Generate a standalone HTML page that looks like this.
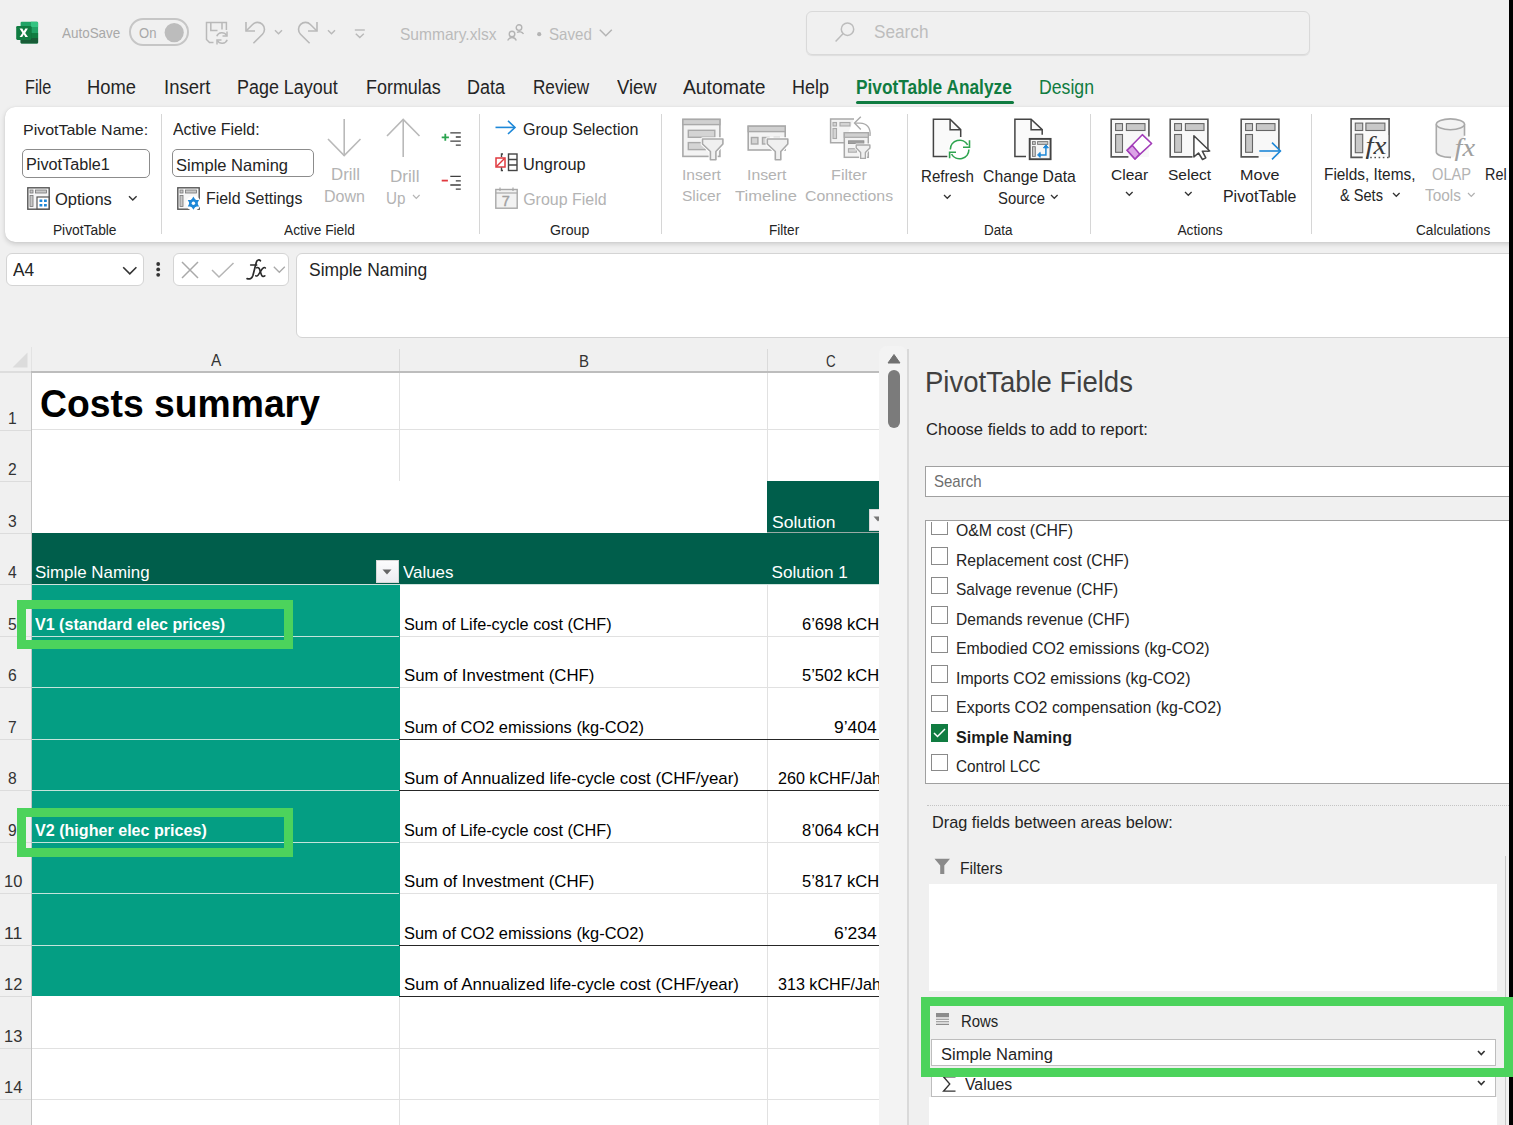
<!DOCTYPE html>
<html><head><meta charset="utf-8"><title>Excel</title>
<style>
html,body{margin:0;padding:0;}
body{width:1513px;height:1125px;overflow:hidden;position:relative;background:#f0f0f0;font-family:"Liberation Sans",sans-serif;}
.t{position:absolute;white-space:nowrap;transform-origin:0 0;}
.r{position:absolute;box-sizing:border-box;}
svg.r{overflow:visible;}
</style></head><body>
<svg class="r" style="left:16px;top:21px;" width="23" height="23" viewBox="0 0 23 23">
<rect x="4.6" y="0.8" width="17.5" height="21.7" rx="1.2" fill="#21a366"/>
<path d="M15 0.8 H20.9 A1.2 1.2 0 0 1 22.1 2 V6 H15 Z" fill="#33c481"/>
<rect x="15" y="12" width="7.1" height="5" fill="#107c41"/>
<path d="M4.6 17 H22.1 V21.3 A1.2 1.2 0 0 1 20.9 22.5 H5.8 A1.2 1.2 0 0 1 4.6 21.3 Z" fill="#185c37"/>
<rect x="4.6" y="6" width="11" height="13" fill="#000" opacity="0.18"/>
<rect x="0.2" y="4.9" width="15.3" height="14" rx="1.3" fill="#107c41"/>
<path d="M3.6 7.4 H6.3 L7.8 10.3 L9.3 7.4 H11.9 L9.2 11.9 L12 16 H9.3 L7.8 13.3 L6.2 16 H3.6 L6.4 11.9 Z" fill="#fff"/>
</svg>
<div class="t" style="left:61.50px;top:24.00px;font-size:14.971px;line-height:17.000px;font-weight:normal;color:#a8a8a8;transform:scaleX(0.8980);">AutoSave</div>
<div class="r" style="left:129.2px;top:18.3px;width:59.400000000000006px;height:27.400000000000002px;border:2px solid #c6c6c6;border-radius:14px;"></div>
<div class="t" style="left:138.80px;top:24.00px;font-size:14.971px;line-height:17.000px;font-weight:normal;color:#a8a8a8;transform:scaleX(0.8713);">On</div>
<svg class="r" style="left:164px;top:23px;" width="20" height="20" viewBox="0 0 20 20"><circle cx="10.2" cy="9.6" r="9.6" fill="#bcbcbc"/></svg>
<svg class="r" style="left:205px;top:21px;" width="24" height="24" viewBox="0 0 24 24"><g fill="none" stroke="#b9b9b9" stroke-width="1.5">
<path d="M21.4 9 V1.5 H1.5 V18.5 L4.5 21.5 H8.5"/><path d="M5.8 1.5 V9.5 H12.5"/><path d="M17 1.5 V8.5"/>
<path d="M11.8 15.2 A5.4 5.4 0 0 1 21.6 14.5"/><path d="M22.2 18.8 A5.4 5.4 0 0 1 12.4 19.5"/>
<path d="M22 10.5 V15 H17.5"/><path d="M12 23.5 V19 H16.5"/></g></svg>
<svg class="r" style="left:244px;top:21px;" width="24" height="24" viewBox="0 0 24 24"><g fill="none" stroke="#b9b9b9" stroke-width="1.6">
<path d="M2 1 V10 H11"/><path d="M2.3 9.7 L8.6 3.5 A6.9 6.9 0 0 1 18.5 13.2 L9.4 22.3"/></g></svg>
<svg class="r" style="left:274px;top:29px;" width="10" height="8" viewBox="0 0 10 8"><path d="M1 1.2 L4.5 4.8 L8 1.2" fill="none" stroke="#b9b9b9" stroke-width="1.4"/></svg>
<svg class="r" style="left:297px;top:21px;" width="24" height="24" viewBox="0 0 24 24"><g fill="none" stroke="#b9b9b9" stroke-width="1.6">
<path d="M20 1 V10 H11"/><path d="M19.7 9.7 L13.4 3.5 A6.9 6.9 0 0 0 3.5 13.2 L12.6 22.3"/></g></svg>
<svg class="r" style="left:327px;top:29px;" width="10" height="8" viewBox="0 0 10 8"><path d="M1 1.2 L4.5 4.8 L8 1.2" fill="none" stroke="#b9b9b9" stroke-width="1.4"/></svg>
<svg class="r" style="left:354px;top:29px;" width="12" height="11" viewBox="0 0 12 11"><g fill="none" stroke="#b9b9b9" stroke-width="1.4"><path d="M0.8 1 H10.8"/><path d="M1.8 4.8 L5.8 8.6 L9.8 4.8"/></g></svg>
<div class="t" style="left:399.50px;top:25.00px;font-size:16.715px;line-height:19.000px;font-weight:normal;color:#bbbbbb;transform:scaleX(0.9305);">Summary.xlsx</div>
<svg class="r" style="left:507px;top:24px;" width="18" height="17" viewBox="0 0 18 17"><g fill="none" stroke="#b4b4b4" stroke-width="1.4"><circle cx="5" cy="10" r="2.8"/><path d="M0.7 16.5 A4.6 4.6 0 0 1 9.3 16.5"/>
<circle cx="12" cy="3.6" r="2.8"/><path d="M10 8.5 A4.6 4.6 0 0 1 16.5 10"/></g></svg>
<svg class="r" style="left:537px;top:32px;" width="5" height="5" viewBox="0 0 5 5"><circle cx="2.2" cy="2.2" r="2.1" fill="#b4b4b4"/></svg>
<div class="t" style="left:549.40px;top:25.00px;font-size:16.715px;line-height:19.000px;font-weight:normal;color:#bbbbbb;transform:scaleX(0.9051);">Saved</div>
<svg class="r" style="left:599px;top:29px;" width="14" height="8" viewBox="0 0 14 8"><path d="M0.8 0.8 L6.8 6.8 L12.8 0.8" fill="none" stroke="#b4b4b4" stroke-width="1.5"/></svg>
<div class="r" style="left:805.5px;top:10.7px;width:504.0999999999999px;height:44.7px;border:1.3px solid #d9d9d9;border-radius:6px;box-shadow:0 1px 1px rgba(0,0,0,0.08);"></div>
<svg class="r" style="left:834px;top:22px;" width="22" height="22" viewBox="0 0 22 22"><g fill="none" stroke="#bcbcbc" stroke-width="1.5"><circle cx="13.5" cy="7.2" r="6.2"/><path d="M9.2 11.6 L1.6 19.6"/></g></svg>
<div class="t" style="left:874.00px;top:21.00px;font-size:18.314px;line-height:21.000px;font-weight:normal;color:#bdbdbd;transform:scaleX(0.9392);">Search</div>
<div class="t" style="left:24.60px;top:76.00px;font-size:19.913px;line-height:22.000px;font-weight:normal;color:#242424;transform:scaleX(0.8165);">File</div>
<div class="t" style="left:87.30px;top:76.00px;font-size:19.913px;line-height:22.000px;font-weight:normal;color:#242424;transform:scaleX(0.9206);">Home</div>
<div class="t" style="left:163.50px;top:76.00px;font-size:19.913px;line-height:22.000px;font-weight:normal;color:#242424;transform:scaleX(0.9297);">Insert</div>
<div class="t" style="left:237.30px;top:76.00px;font-size:19.913px;line-height:22.000px;font-weight:normal;color:#242424;transform:scaleX(0.9005);">Page Layout</div>
<div class="t" style="left:365.50px;top:76.00px;font-size:19.913px;line-height:22.000px;font-weight:normal;color:#242424;transform:scaleX(0.9001);">Formulas</div>
<div class="t" style="left:467.30px;top:76.00px;font-size:19.913px;line-height:22.000px;font-weight:normal;color:#242424;transform:scaleX(0.9034);">Data</div>
<div class="t" style="left:533.40px;top:76.00px;font-size:19.913px;line-height:22.000px;font-weight:normal;color:#242424;transform:scaleX(0.8607);">Review</div>
<div class="t" style="left:617.00px;top:76.00px;font-size:19.913px;line-height:22.000px;font-weight:normal;color:#242424;transform:scaleX(0.9275);">View</div>
<div class="t" style="left:683.10px;top:76.00px;font-size:19.913px;line-height:22.000px;font-weight:normal;color:#242424;transform:scaleX(0.9691);">Automate</div>
<div class="t" style="left:792.20px;top:76.00px;font-size:19.913px;line-height:22.000px;font-weight:normal;color:#242424;transform:scaleX(0.9034);">Help</div>
<div class="t" style="left:856.40px;top:76.00px;font-size:19.913px;line-height:22.000px;font-weight:bold;color:#107c41;transform:scaleX(0.8696);">PivotTable Analyze</div>
<div class="r" style="left:856px;top:100.7px;width:157.60000000000002px;height:3.200000000000003px;background:#107c41;border-radius:2px;"></div>
<div class="t" style="left:1038.60px;top:76.00px;font-size:19.913px;line-height:22.000px;font-weight:normal;color:#107c41;transform:scaleX(0.8873);">Design</div>
<div class="r" style="left:5.4px;top:107px;width:1534.6px;height:134.5px;background:#ffffff;border-radius:10px;box-shadow:0 2px 5px rgba(0,0,0,0.16),0 0 1px rgba(0,0,0,0.14);"></div>
<div class="r" style="left:160.5px;top:114px;width:1.0px;height:120px;background:#d6d6d6;"></div>
<div class="r" style="left:478.5px;top:114px;width:1.0px;height:120px;background:#d6d6d6;"></div>
<div class="r" style="left:661.4px;top:114px;width:1.0px;height:120px;background:#d6d6d6;"></div>
<div class="r" style="left:906.9px;top:114px;width:1.0px;height:120px;background:#d6d6d6;"></div>
<div class="r" style="left:1090px;top:114px;width:1px;height:120px;background:#d6d6d6;"></div>
<div class="r" style="left:1310.5px;top:114px;width:1.0px;height:120px;background:#d6d6d6;"></div>
<div class="t" style="left:52.90px;top:223.00px;font-size:13.808px;line-height:16.000px;font-weight:normal;color:#242424;">PivotTable</div>
<div class="t" style="left:283.70px;top:223.00px;font-size:13.808px;line-height:16.000px;font-weight:normal;color:#242424;transform:scaleX(0.9934);">Active Field</div>
<div class="t" style="left:549.70px;top:223.00px;font-size:13.808px;line-height:16.000px;font-weight:normal;color:#242424;transform:scaleX(1.0240);">Group</div>
<div class="t" style="left:768.60px;top:223.00px;font-size:13.808px;line-height:16.000px;font-weight:normal;color:#242424;transform:scaleX(0.9842);">Filter</div>
<div class="t" style="left:983.50px;top:223.00px;font-size:13.808px;line-height:16.000px;font-weight:normal;color:#242424;transform:scaleX(0.9771);">Data</div>
<div class="t" style="left:1177.40px;top:223.00px;font-size:13.808px;line-height:16.000px;font-weight:normal;color:#242424;">Actions</div>
<div class="t" style="left:1415.70px;top:223.00px;font-size:13.808px;line-height:16.000px;font-weight:normal;color:#242424;transform:scaleX(0.9878);">Calculations</div>
<div class="t" style="left:22.80px;top:121.00px;font-size:15.552px;line-height:17.000px;font-weight:normal;color:#242424;transform:scaleX(1.0272);">PivotTable Name:</div>
<div class="r" style="left:22px;top:149px;width:127.6px;height:28.5px;background:#fff;border:1px solid #8c8c8c;border-radius:5px;"></div>
<div class="t" style="left:25.60px;top:155.00px;font-size:16.424px;line-height:18.000px;font-weight:normal;color:#242424;transform:scaleX(0.9880);">PivotTable1</div>
<svg class="r" style="left:27px;top:187px;" width="23" height="23" viewBox="0 0 23 23"><rect x="0.8" y="0.8" width="21.4" height="21.4" fill="#f6f6f6" stroke="#555" stroke-width="1.4"/>
<rect x="3" y="3" width="3" height="3" fill="#c8c8c8" stroke="#777" stroke-width="0.8"/><rect x="8.5" y="3" width="11" height="3" fill="#c8c8c8" stroke="#777" stroke-width="0.8"/>
<rect x="3" y="8.5" width="3" height="11" fill="#c8c8c8" stroke="#777" stroke-width="0.8"/>
<rect x="10" y="10" width="12" height="12" fill="#fff" stroke="#555" stroke-width="1.2"/>
<rect x="12.5" y="12.5" width="2.8" height="2.5" fill="#1e88d8"/><rect x="17" y="12.5" width="2.8" height="2.5" fill="#1e88d8"/>
<rect x="12.5" y="17" width="2.8" height="2.5" fill="#1e88d8"/><rect x="17" y="17" width="2.8" height="2.5" fill="#1e88d8"/></svg>
<div class="t" style="left:54.80px;top:189.00px;font-size:17.151px;line-height:20.000px;font-weight:normal;color:#242424;transform:scaleX(0.9626);">Options</div>
<svg class="r" style="left:128px;top:195px;" width="10" height="7" viewBox="0 0 10 7"><path d="M1 1.2 L4.8 5 L8.6 1.2" fill="none" stroke="#333" stroke-width="1.4"/></svg>
<div class="t" style="left:172.70px;top:121.00px;font-size:15.843px;line-height:17.000px;font-weight:normal;color:#242424;transform:scaleX(1.0048);">Active Field:</div>
<div class="r" style="left:172.3px;top:149.4px;width:142.09999999999997px;height:27.900000000000006px;background:#fff;border:1px solid #8c8c8c;border-radius:5px;"></div>
<div class="t" style="left:175.90px;top:156.00px;font-size:16.715px;line-height:19.000px;font-weight:normal;color:#242424;transform:scaleX(0.9891);">Simple Naming</div>
<svg class="r" style="left:177px;top:187px;" width="23" height="23" viewBox="0 0 23 23"><rect x="0.8" y="0.8" width="21.4" height="21.4" fill="#f6f6f6" stroke="#555" stroke-width="1.4"/>
<rect x="3" y="3" width="3" height="3" fill="#c8c8c8" stroke="#777" stroke-width="0.8"/><rect x="8.5" y="3" width="11" height="3" fill="#c8c8c8" stroke="#777" stroke-width="0.8"/>
<rect x="3" y="8.5" width="3" height="11" fill="#c8c8c8" stroke="#777" stroke-width="0.8"/>
<circle cx="16.4" cy="16.2" r="7.5" fill="#fff"/>
<g fill="#1e88d8"><path d="M16.4 9.6 L19.7 15 L13.1 15 Z"/><path d="M16.4 22.8 L19.7 17.4 L13.1 17.4 Z"/><path d="M10.7 12.9 L16.9 13 L13.7 18.5 Z" /><path d="M22.1 19.5 L15.9 19.4 L19.1 13.9 Z"/><path d="M10.7 19.5 L13.7 13.9 L16.9 19.4 Z"/><path d="M22.1 12.9 L19.1 18.5 L15.9 13 Z"/>
<circle cx="16.4" cy="16.2" r="4.2"/></g><circle cx="16.4" cy="16.2" r="1.7" fill="#fff"/></svg>
<div class="t" style="left:205.50px;top:188.00px;font-size:17.151px;line-height:20.000px;font-weight:normal;color:#242424;transform:scaleX(0.9286);">Field Settings</div>
<svg class="r" style="left:327px;top:118px;" width="35" height="40" viewBox="0 0 35 40"><g fill="none" stroke="#b9b9b9" stroke-width="1.6"><path d="M17.2 1 V38"/><path d="M1 21 L17.2 37.5 L33.5 21"/></g></svg>
<div class="t" style="left:331.00px;top:164.00px;font-size:17.297px;line-height:20.000px;font-weight:normal;color:#b3b3b3;transform:scaleX(0.9738);">Drill</div>
<div class="t" style="left:324.00px;top:187.00px;font-size:16.424px;line-height:18.000px;font-weight:normal;color:#b3b3b3;transform:scaleX(0.9764);">Down</div>
<svg class="r" style="left:386px;top:118px;" width="35" height="40" viewBox="0 0 35 40"><g fill="none" stroke="#b9b9b9" stroke-width="1.6"><path d="M17.2 2 V39"/><path d="M1 18 L17.2 1.5 L33.5 18"/></g></svg>
<div class="t" style="left:389.50px;top:166.00px;font-size:17.297px;line-height:20.000px;font-weight:normal;color:#b3b3b3;transform:scaleX(0.9906);">Drill</div>
<div class="t" style="left:386.00px;top:189.00px;font-size:16.424px;line-height:18.000px;font-weight:normal;color:#b3b3b3;transform:scaleX(0.9287);">Up</div>
<svg class="r" style="left:411.5px;top:194px;" width="9" height="6" viewBox="0 0 9 6"><path d="M1 1 L4.3 4.3 L7.6 1" fill="none" stroke="#b5b5b5" stroke-width="1.2"/></svg>
<svg class="r" style="left:441px;top:131px;" width="21" height="16" viewBox="0 0 21 16"><path d="M0.7 6.3 H7.9 M4.3 2.8 V9.8" stroke="#2aa44f" stroke-width="1.8"/>
<g stroke="#404040" stroke-width="1.3"><path d="M9.3 1.8 H19.8 M14.8 6 H19.8 M9.3 10.2 H19.8 M14.8 14.2 H19.8"/></g></svg>
<svg class="r" style="left:441px;top:175px;" width="21" height="16" viewBox="0 0 21 16"><path d="M0.7 5.6 H6.9" stroke="#e0383e" stroke-width="1.8"/>
<g stroke="#404040" stroke-width="1.3"><path d="M9.3 1.4 H19.8 M14.8 5.8 H19.8 M9.3 10 H19.8 M14.8 14.1 H19.8"/></g></svg>
<svg class="r" style="left:495px;top:120px;" width="22" height="15" viewBox="0 0 22 15"><g fill="none" stroke="#1e88d8" stroke-width="1.6"><path d="M0.5 7.4 H20"/><path d="M13 0.8 L20 7.4 L13 14"/></g></svg>
<div class="t" style="left:523.20px;top:120.00px;font-size:16.570px;line-height:19.000px;font-weight:normal;color:#242424;transform:scaleX(0.9712);">Group Selection</div>
<svg class="r" style="left:495px;top:153px;" width="23" height="19" viewBox="0 0 23 19"><rect x="1" y="5" width="9" height="9" fill="#fff" stroke="#e0383e" stroke-width="1.5"/><path d="M1.5 13.5 L9.5 5.5" stroke="#e0383e" stroke-width="1.4"/>
<g fill="none" stroke="#444" stroke-width="1.4"><path d="M8 1 H6.5 V4 M6.5 14.5 V17.5 H8"/><rect x="13.5" y="1" width="8.5" height="16.5"/><path d="M13.5 6.5 H22 M13.5 12 H22"/></g></svg>
<div class="t" style="left:523.20px;top:155.00px;font-size:17.006px;line-height:19.000px;font-weight:normal;color:#242424;transform:scaleX(0.9596);">Ungroup</div>
<svg class="r" style="left:495px;top:187px;" width="23" height="22" viewBox="0 0 23 22"><rect x="0.8" y="2.5" width="21.4" height="18.7" fill="#f2f2f2" stroke="#a8a8a8" stroke-width="1.4"/><path d="M0.8 6 H22.2" stroke="#a8a8a8" stroke-width="1.2"/>
<path d="M5 0.5 V4 M18 0.5 V4" stroke="#a8a8a8" stroke-width="1.2"/><text x="6.8" y="19.3" font-family="Liberation Sans" font-size="14.5" fill="#a0a0a0" stroke="#a0a0a0" stroke-width="0.4">7</text></svg>
<div class="t" style="left:523.20px;top:191.00px;font-size:15.988px;line-height:17.000px;font-weight:normal;color:#b3b3b3;">Group Field</div>
<svg class="r" style="left:682px;top:118px;" width="44" height="44" viewBox="0 0 44 44"><rect x="0.9" y="1.4" width="37" height="37" fill="#f3f3f3" stroke="#a9a9a9" stroke-width="1.6"/>
<rect x="0.9" y="1.4" width="37" height="5.2" fill="#d0d0d0" stroke="#a9a9a9" stroke-width="1.4"/>
<rect x="6.3" y="12.3" width="26.5" height="7" fill="#d4d4d4" stroke="#a9a9a9" stroke-width="1.4"/>
<rect x="6.3" y="24.6" width="17" height="7" fill="#d4d4d4" stroke="#a9a9a9" stroke-width="1.4"/>
<path d="M20.5 21 H40.9 V26 L33.9 33.5 V41.8 H28.4 V33.5 L20.5 26 Z" fill="#f0f0f0" stroke="#fff" stroke-width="3.5" stroke-linejoin="round"/>
<path d="M20.5 21 H40.9 V26 L33.9 33.5 V41.8 H28.4 V33.5 L20.5 26 Z" fill="#f0f0f0" stroke="#a9a9a9" stroke-width="1.6" stroke-linejoin="round"/></svg>
<svg class="r" style="left:746px;top:125px;" width="44" height="36" viewBox="0 0 44 36"><rect x="2.2" y="1.2" width="37" height="23.8" fill="#f3f3f3" stroke="#a9a9a9" stroke-width="1.6"/>
<rect x="2.2" y="1.2" width="37" height="5.4" fill="#d0d0d0" stroke="#a9a9a9" stroke-width="1.4"/>
<rect x="5.4" y="12.5" width="6.5" height="6.5" fill="#d4d4d4" stroke="#a9a9a9" stroke-width="1.4"/>
<rect x="16.5" y="12.5" width="6.5" height="6.5" fill="#d4d4d4" stroke="#a9a9a9" stroke-width="1.4"/>
<path d="M27.5 12.5 H34" stroke="#a9a9a9" stroke-width="1.4"/>
<path d="M21.3 14 H41.8 V19 L34.8 26.5 V34.8 H29.3 V26.5 L21.3 19 Z" fill="#f0f0f0" stroke="#fff" stroke-width="3.5" stroke-linejoin="round"/>
<path d="M21.3 14 H41.8 V19 L34.8 26.5 V34.8 H29.3 V26.5 L21.3 19 Z" fill="#f0f0f0" stroke="#a9a9a9" stroke-width="1.6" stroke-linejoin="round"/></svg>
<svg class="r" style="left:829px;top:115px;" width="44" height="46" viewBox="0 0 44 46"><path d="M25 3.9 H1.6 V27.7 H15" fill="#f3f3f3" stroke="#a9a9a9" stroke-width="1.5"/>
<rect x="4" y="7.5" width="3.5" height="3.5" fill="#d4d4d4" stroke="#a9a9a9" stroke-width="1.1"/><rect x="11" y="7.5" width="10" height="3.5" fill="#d4d4d4" stroke="#a9a9a9" stroke-width="1.1"/>
<rect x="4" y="13.5" width="3.5" height="10" fill="#d4d4d4" stroke="#a9a9a9" stroke-width="1.1"/>
<path d="M31.8 1.8 L25.5 8.1 L31.8 14.4" fill="none" stroke="#a9a9a9" stroke-width="1.4"/>
<path d="M26 8.1 H31 C37.5 8.1 42 12.5 41 21" fill="none" stroke="#a9a9a9" stroke-width="1.4"/>
<rect x="15.3" y="17.8" width="24" height="24.5" fill="#f3f3f3" stroke="#a9a9a9" stroke-width="1.5"/>
<rect x="15.3" y="17.8" width="24" height="4.5" fill="#d0d0d0" stroke="#a9a9a9" stroke-width="1.2"/>
<rect x="19.4" y="25.8" width="15.5" height="2.8" fill="#a0a0a0" stroke="#8a8a8a" stroke-width="0.8"/>
<rect x="19.4" y="33.7" width="8" height="3.5" fill="#d4d4d4" stroke="#a9a9a9" stroke-width="1"/>
<path d="M27.2 30 H40.9 V33 L36.4 37.5 V43.4 H31.6 V37.5 L27.2 33 Z" fill="#f0f0f0" stroke="#fff" stroke-width="3" stroke-linejoin="round"/>
<path d="M27.2 30 H40.9 V33 L36.4 37.5 V43.4 H31.6 V37.5 L27.2 33 Z" fill="#f0f0f0" stroke="#a9a9a9" stroke-width="1.4" stroke-linejoin="round"/></svg>
<div class="t" style="left:682.00px;top:166.00px;font-size:15.552px;line-height:17.000px;font-weight:normal;color:#b3b3b3;">Insert</div>
<div class="t" style="left:682.00px;top:187.00px;font-size:15.552px;line-height:17.000px;font-weight:normal;color:#b3b3b3;">Slicer</div>
<div class="t" style="left:746.80px;top:166.00px;font-size:15.552px;line-height:17.000px;font-weight:normal;color:#b3b3b3;transform:scaleX(1.0155);">Insert</div>
<div class="t" style="left:734.70px;top:187.00px;font-size:15.552px;line-height:17.000px;font-weight:normal;color:#b3b3b3;transform:scaleX(1.0637);">Timeline</div>
<div class="t" style="left:831.00px;top:166.00px;font-size:15.552px;line-height:17.000px;font-weight:normal;color:#b3b3b3;transform:scaleX(1.0416);">Filter</div>
<div class="t" style="left:804.70px;top:187.00px;font-size:15.552px;line-height:17.000px;font-weight:normal;color:#b3b3b3;transform:scaleX(1.0190);">Connections</div>
<svg class="r" style="left:932px;top:117px;" width="42" height="44" viewBox="0 0 42 44"><path d="M1.4 2.2 H18.1 L28.7 12.6 V39.4 H1.4 Z" fill="#fafafa"/>
<path d="M15.3 39.4 H1.4 V2.2 H18.1 L28.7 12.6 V20" fill="none" stroke="#444" stroke-width="1.5"/><path d="M18.1 2.2 V12.8 H28.7" fill="none" stroke="#444" stroke-width="1.5"/>
<circle cx="27.6" cy="32.5" r="11" fill="#fff"/>
<g fill="none" stroke="#2ea44f" stroke-width="1.6"><path d="M18.3 32.5 A9.3 9.3 0 0 1 35.65 27.85"/><path d="M36.9 32.5 A9.3 9.3 0 0 1 19.55 37.15"/>
<path d="M37.5 23.2 V30.2 H31"/><path d="M17.6 41.3 V35.3 H24"/></g></svg>
<div class="t" style="left:921.00px;top:168.00px;font-size:15.698px;line-height:17.000px;font-weight:normal;color:#242424;transform:scaleX(0.9606);">Refresh</div>
<svg class="r" style="left:943px;top:194px;" width="9" height="6" viewBox="0 0 9 6"><path d="M1 1 L4.3 4.3 L7.6 1" fill="none" stroke="#333" stroke-width="1.3"/></svg>
<svg class="r" style="left:1013px;top:117px;" width="40" height="44" viewBox="0 0 40 44"><path d="M1.9 2.2 H18.1 L29.2 12.6 V39.4 H1.9 Z" fill="#fafafa"/>
<path d="M13 39.4 H1.9 V2.2 H18.1 L29.2 12.6 V17.7" fill="none" stroke="#444" stroke-width="1.5"/><path d="M18.1 2.2 V12.8 H29.2" fill="none" stroke="#444" stroke-width="1.5"/>
<rect x="16.7" y="21.9" width="20.9" height="20.3" fill="#f6f6f6" stroke="#444" stroke-width="1.9"/>
<rect x="19.5" y="24.6" width="2.8" height="2.8" fill="#c8c8c8" stroke="#777" stroke-width="0.9"/><rect x="24.6" y="24.6" width="10.2" height="2.8" fill="#c8c8c8" stroke="#777" stroke-width="0.9"/>
<rect x="19.5" y="29.7" width="2.8" height="9.7" fill="#c8c8c8" stroke="#777" stroke-width="0.9"/>
<g fill="none" stroke="#1e88d8" stroke-width="1.5"><path d="M26.5 37.9 H32.9 V30"/></g>
<path d="M30.4 30.8 L32.9 27.8 L35.4 30.8 Z M27.2 35.4 L24.5 37.9 L27.2 40.4 Z" fill="#1e88d8" stroke="#1e88d8" stroke-width="1"/></svg>
<div class="t" style="left:982.60px;top:168.00px;font-size:15.698px;line-height:17.000px;font-weight:normal;color:#242424;transform:scaleX(1.0042);">Change Data</div>
<div class="t" style="left:997.80px;top:190.00px;font-size:15.698px;line-height:17.000px;font-weight:normal;color:#242424;transform:scaleX(0.9449);">Source</div>
<svg class="r" style="left:1050px;top:194px;" width="9" height="6" viewBox="0 0 9 6"><path d="M1 1 L4.3 4.3 L7.6 1" fill="none" stroke="#333" stroke-width="1.3"/></svg>
<svg class="r" style="left:1110px;top:118px;" width="45" height="44" viewBox="0 0 45 44"><rect x="1.2" y="1.3" width="37.7" height="37.6" fill="#f8f8f8"/>
<path d="M38.9 18.5 V1.3 H1.2 V38.9 H18.4" fill="none" stroke="#555" stroke-width="1.6"/>
<rect x="5.6" y="5.6" width="6.9" height="6.9" fill="#c8c8c8" stroke="#666" stroke-width="1.1"/><rect x="16.4" y="5.6" width="18.6" height="6.9" fill="#c8c8c8" stroke="#666" stroke-width="1.1"/>
<rect x="5.6" y="16.5" width="6.9" height="17.8" fill="#c8c8c8" stroke="#666" stroke-width="1.1"/><path d="M32.3 16.7 L41.6 25.5 L25 40.9 L17.1 32.3 Z" fill="#fff" stroke="#a23cb8" stroke-width="1.6" stroke-linejoin="round"/><path d="M17.1 32.3 L22.4 27.4 L29.6 36 L25 40.9 Z" fill="#dba3e6" stroke="#a23cb8" stroke-width="1.5" stroke-linejoin="round"/></svg>
<div class="t" style="left:1111.30px;top:166.00px;font-size:15.262px;line-height:17.000px;font-weight:normal;color:#242424;transform:scaleX(1.0200);">Clear</div>
<svg class="r" style="left:1125px;top:191px;" width="9" height="6" viewBox="0 0 9 6"><path d="M1 1 L4.3 4.3 L7.6 1" fill="none" stroke="#333" stroke-width="1.3"/></svg>
<svg class="r" style="left:1169px;top:118px;" width="45" height="44" viewBox="0 0 45 44"><rect x="1.2" y="1.3" width="37.7" height="37.6" fill="#f8f8f8"/>
<path d="M38.9 34 V1.3 H1.2 V38.9 H23.5" fill="none" stroke="#555" stroke-width="1.6"/>
<rect x="5.6" y="5.6" width="6.9" height="6.9" fill="#c8c8c8" stroke="#666" stroke-width="1.1"/><rect x="16.4" y="5.6" width="18.6" height="6.9" fill="#c8c8c8" stroke="#666" stroke-width="1.1"/>
<rect x="5.6" y="16.5" width="6.9" height="17.8" fill="#c8c8c8" stroke="#666" stroke-width="1.1"/><path d="M24.9 17.8 V38.9 L29.5 35 L33.5 41.5 L36.8 39.8 L33.3 33.2 L40.7 33 Z" fill="#fff" stroke="#444" stroke-width="1.5" stroke-linejoin="round"/></svg>
<div class="t" style="left:1167.80px;top:166.00px;font-size:15.262px;line-height:17.000px;font-weight:normal;color:#242424;transform:scaleX(1.0161);">Select</div>
<svg class="r" style="left:1184px;top:191px;" width="9" height="6" viewBox="0 0 9 6"><path d="M1 1 L4.3 4.3 L7.6 1" fill="none" stroke="#333" stroke-width="1.3"/></svg>
<svg class="r" style="left:1240px;top:118px;" width="45" height="44" viewBox="0 0 45 44"><rect x="1.2" y="1.3" width="37.7" height="37.6" fill="#f8f8f8"/>
<path d="M38.9 32.4 V1.3 H1.2 V38.9 H18.6" fill="none" stroke="#555" stroke-width="1.6"/>
<rect x="5.6" y="5.6" width="6.9" height="6.9" fill="#c8c8c8" stroke="#666" stroke-width="1.1"/><rect x="16.4" y="5.6" width="18.6" height="6.9" fill="#c8c8c8" stroke="#666" stroke-width="1.1"/>
<rect x="5.6" y="16.5" width="6.9" height="17.8" fill="#c8c8c8" stroke="#666" stroke-width="1.1"/><g fill="none" stroke="#1e88d8" stroke-width="1.6"><path d="M19.3 33 H40.2"/><path d="M32 24.6 L40.4 33 L32 41.4"/></g></svg>
<div class="t" style="left:1240.20px;top:166.00px;font-size:15.262px;line-height:17.000px;font-weight:normal;color:#242424;transform:scaleX(1.0584);">Move</div>
<div class="t" style="left:1222.60px;top:188.00px;font-size:15.698px;line-height:17.000px;font-weight:normal;color:#242424;transform:scaleX(1.0134);">PivotTable</div>
<svg class="r" style="left:1350px;top:118px;" width="42" height="44" viewBox="0 0 42 44"><rect x="1.1" y="0.9" width="38" height="38.5" fill="#fafafa"/>
<path d="M12.7 39.4 H1.1 V0.9 H39.1 V39.4" fill="none" stroke="#555" stroke-width="1.6"/>
<path d="M16 39.4 H39" fill="none" stroke="#555" stroke-width="1.6" stroke-dasharray="1.6 2.6"/>
<rect x="5.3" y="5.1" width="7.4" height="7.4" fill="#c8c8c8" stroke="#666" stroke-width="1.1"/><rect x="15.9" y="5.1" width="19" height="7.4" fill="#c8c8c8" stroke="#666" stroke-width="1.1"/>
<rect x="5.3" y="16.2" width="7.4" height="18.5" fill="#c8c8c8" stroke="#666" stroke-width="1.1"/>
<rect x="15" y="17" width="23.2" height="21.6" fill="#fafafa"/>
<text x="15.5" y="36.2" font-family="Liberation Serif" font-style="italic" font-size="25" fill="#3a3a3a" textLength="21" lengthAdjust="spacingAndGlyphs">fx</text></svg>
<div class="t" style="left:1324.20px;top:164.00px;font-size:17.297px;line-height:20.000px;font-weight:normal;color:#242424;transform:scaleX(0.8897);">Fields, Items,</div>
<div class="t" style="left:1340.00px;top:186.00px;font-size:16.279px;line-height:18.000px;font-weight:normal;color:#242424;transform:scaleX(0.8967);">&amp; Sets</div>
<svg class="r" style="left:1392px;top:191.5px;" width="9" height="6" viewBox="0 0 9 6"><path d="M1 1 L4.3 4.3 L7.6 1" fill="none" stroke="#333" stroke-width="1.3"/></svg>
<svg class="r" style="left:1435px;top:118px;" width="42" height="44" viewBox="0 0 42 44"><path d="M1.3 6.3 V33.5 A14.1 5.6 0 0 0 15.4 39.4 L19 39.4 L29.5 17.8 V6.3 Z" fill="#f0f0f0"/>
<path d="M29.5 17.8 V6.3 M1.3 6.3 V33.5 A14.1 5.6 0 0 0 16 39.4" fill="none" stroke="#a9a9a9" stroke-width="1.6"/>
<ellipse cx="15.4" cy="6.3" rx="14.1" ry="5.4" fill="#f3f3f3" stroke="#a9a9a9" stroke-width="1.6"/>
<text x="19.5" y="37.5" font-family="Liberation Serif" font-style="italic" font-size="25" fill="#a0a0a0" textLength="20.5" lengthAdjust="spacingAndGlyphs">fx</text></svg>
<div class="t" style="left:1431.50px;top:165.00px;font-size:16.424px;line-height:18.000px;font-weight:normal;color:#b3b3b3;transform:scaleX(0.8945);">OLAP</div>
<div class="t" style="left:1424.60px;top:186.00px;font-size:16.279px;line-height:18.000px;font-weight:normal;color:#b3b3b3;transform:scaleX(0.9473);">Tools</div>
<svg class="r" style="left:1467px;top:192px;" width="9" height="6" viewBox="0 0 9 6"><path d="M1 1 L4.3 4.3 L7.6 1" fill="none" stroke="#b0b0b0" stroke-width="1.2"/></svg>
<div class="t" style="left:1485.40px;top:165.00px;font-size:16.424px;line-height:18.000px;font-weight:normal;color:#242424;transform:scaleX(0.8764);">Rel</div>
<div class="r" style="left:6px;top:253.3px;width:138.4px;height:32.30000000000001px;background:#fff;border:1px solid #d4d4d4;border-radius:6px;"></div>
<div class="t" style="left:12.90px;top:259.00px;font-size:18.459px;line-height:21.000px;font-weight:normal;color:#242424;transform:scaleX(0.9389);">A4</div>
<svg class="r" style="left:122px;top:266px;" width="16" height="10" viewBox="0 0 16 10"><path d="M1.2 1.2 L7.8 7.8 L14.4 1.2" fill="none" stroke="#333" stroke-width="1.6"/></svg>
<svg class="r" style="left:156px;top:262px;" width="5" height="15" viewBox="0 0 5 15"><circle cx="2.2" cy="2" r="1.9" fill="#333"/><circle cx="2.2" cy="7.4" r="1.9" fill="#333"/><circle cx="2.2" cy="12.8" r="1.9" fill="#333"/></svg>
<div class="r" style="left:172.5px;top:253.3px;width:116.0px;height:32.30000000000001px;background:#fff;border:1px solid #d4d4d4;border-radius:6px;"></div>
<svg class="r" style="left:181px;top:261px;" width="18" height="18" viewBox="0 0 18 18"><path d="M1 1 L17 17 M17 1 L1 17" stroke="#a9a9a9" stroke-width="1.5"/></svg>
<svg class="r" style="left:211px;top:262px;" width="23" height="16" viewBox="0 0 23 16"><path d="M1 8 L8 15 L22.5 1" fill="none" stroke="#b5b5b5" stroke-width="1.5"/></svg>
<svg class="r" style="left:244px;top:256px;" width="24" height="26" viewBox="0 0 24 26"><g fill="none" stroke="#2a2a2a" stroke-linecap="round">
<path d="M16.4 4.8 C15.4 3.4 13.2 3.6 12.4 6 L8.9 19.5 C8.1 22.2 5.9 23.6 3.1 22.6" stroke-width="1.7"/>
<path d="M6.6 9 H12.8" stroke-width="1.4"/>
<path d="M12.8 11.8 C14.2 11 15.2 12 16 14.4 L17.4 18.8 C18 20.6 19.6 20.8 20.8 19.8" stroke-width="1.6"/>
<path d="M21.4 12 C20.4 11 18.9 11.6 17.4 14 L14.8 18.2 C13.8 20 12.6 20.4 11.8 19.8" stroke-width="1.6"/></g></svg>
<svg class="r" style="left:273px;top:266px;" width="13" height="8" viewBox="0 0 13 8"><path d="M0.8 0.8 L6.3 6.3 L11.8 0.8" fill="none" stroke="#a9a9a9" stroke-width="1.3"/></svg>
<div class="r" style="left:295.5px;top:253.3px;width:1244.5px;height:84.5px;background:#fff;border:1px solid #d4d4d4;border-radius:6px;"></div>
<div class="t" style="left:309.30px;top:259.00px;font-size:18.459px;line-height:21.000px;font-weight:normal;color:#242424;transform:scaleX(0.9460);">Simple Naming</div>
<div class="r" style="left:31px;top:372px;width:848px;height:753px;background:#fff;"></div>
<div class="r" style="left:31px;top:429px;width:848px;height:1px;background:#e1e1e1;"></div>
<div class="r" style="left:399.0px;top:372px;width:1.0px;height:109px;background:#e1e1e1;"></div>
<div class="r" style="left:767px;top:372px;width:1px;height:109px;background:#e1e1e1;"></div>
<div class="r" style="left:767px;top:481px;width:112px;height:51px;background:#005e4b;"></div>
<div class="r" style="left:767px;top:532px;width:112px;height:1px;background:#9aaaa5;"></div>
<div class="r" style="left:31px;top:533px;width:848px;height:50.5px;background:#005e4b;"></div>
<div class="r" style="left:31px;top:583.5px;width:848px;height:1.5px;background:#cfe3dd;"></div>
<div class="r" style="left:31px;top:585px;width:368.5px;height:411px;background:#049e83;"></div>
<div class="r" style="left:31px;top:635.5px;width:367.5px;height:1.7000000000000455px;background:#c4e4db;"></div>
<div class="r" style="left:31px;top:686.5px;width:367.5px;height:1.7000000000000455px;background:#c4e4db;"></div>
<div class="r" style="left:31px;top:738.5px;width:367.5px;height:1.7000000000000455px;background:#c4e4db;"></div>
<div class="r" style="left:31px;top:789.5px;width:367.5px;height:1.7000000000000455px;background:#c4e4db;"></div>
<div class="r" style="left:31px;top:841.5px;width:367.5px;height:1.7000000000000455px;background:#c4e4db;"></div>
<div class="r" style="left:31px;top:892.5px;width:367.5px;height:1.7000000000000455px;background:#c4e4db;"></div>
<div class="r" style="left:31px;top:944.5px;width:367.5px;height:1.7000000000000455px;background:#c4e4db;"></div>
<div class="r" style="left:767px;top:585px;width:1px;height:540px;background:#e1e1e1;"></div>
<div class="r" style="left:399.0px;top:996px;width:1.0px;height:129px;background:#e1e1e1;"></div>
<div class="r" style="left:399.5px;top:635.5px;width:479.5px;height:1.0px;background:#e1e1e1;"></div>
<div class="r" style="left:399.5px;top:686.5px;width:479.5px;height:1.0px;background:#e1e1e1;"></div>
<div class="r" style="left:399.0px;top:738.5px;width:480.0px;height:1.5px;background:#262626;"></div>
<div class="r" style="left:399.0px;top:789.5px;width:480.0px;height:1.5px;background:#262626;"></div>
<div class="r" style="left:399.5px;top:841.5px;width:479.5px;height:1.0px;background:#e1e1e1;"></div>
<div class="r" style="left:399.5px;top:892.5px;width:479.5px;height:1.0px;background:#e1e1e1;"></div>
<div class="r" style="left:399.0px;top:944.5px;width:480.0px;height:1.5px;background:#262626;"></div>
<div class="r" style="left:399.0px;top:995.5px;width:480.0px;height:1.5px;background:#262626;"></div>
<div class="r" style="left:399.5px;top:1047.5px;width:479.5px;height:1.0px;background:#e1e1e1;"></div>
<div class="r" style="left:31px;top:1047.5px;width:368.5px;height:1.0px;background:#e1e1e1;"></div>
<div class="r" style="left:399.5px;top:1098.5px;width:479.5px;height:1.0px;background:#e1e1e1;"></div>
<div class="r" style="left:31px;top:1098.5px;width:368.5px;height:1.0px;background:#e1e1e1;"></div>
<div class="r" style="left:376px;top:560px;width:23px;height:22.5px;background:linear-gradient(#fcfcfd,#ececf0);border:1px solid #d8d8d8;"></div>
<svg class="r" style="left:382px;top:569px;" width="11" height="7" viewBox="0 0 11 7"><path d="M0.5 0.5 H9.5 L5 5.5 Z" fill="#666"/></svg>
<div class="r" style="left:869px;top:508.6px;width:10px;height:22.399999999999977px;background:#f4f4f6;border:1px solid #d8d8d8;border-right:none;"></div>
<svg class="r" style="left:873px;top:516px;" width="8" height="6" viewBox="0 0 8 6"><path d="M0.5 0.5 H9.5 L5 5.5 Z" fill="#777"/></svg>
<div class="r" style="left:0px;top:371px;width:31px;height:2px;background:#dddddd;"></div>
<div class="r" style="left:31px;top:371px;width:848px;height:2px;background:#bdbdbd;"></div>
<div class="r" style="left:30.5px;top:347px;width:1.5px;height:24px;background:#e3e3e3;"></div>
<div class="r" style="left:30.5px;top:373px;width:1.5px;height:752px;background:#c4c4c4;"></div>
<div class="r" style="left:399.0px;top:349px;width:1.0px;height:22px;background:#dadada;"></div>
<div class="r" style="left:766.5px;top:349px;width:1.0px;height:22px;background:#dadada;"></div>
<svg class="r" style="left:12px;top:352px;" width="16" height="16" viewBox="0 0 16 16"><path d="M15.5 0.5 V15.5 H0.5 Z" fill="#dcdcdc"/></svg>
<div class="t" style="left:210.50px;top:351.00px;font-size:16.424px;line-height:18.000px;font-weight:normal;color:#333;transform:scaleX(0.9402);">A</div>
<div class="t" style="left:579.00px;top:352.00px;font-size:16.424px;line-height:18.000px;font-weight:normal;color:#333;transform:scaleX(0.9128);">B</div>
<div class="t" style="left:825.70px;top:352.00px;font-size:16.424px;line-height:18.000px;font-weight:normal;color:#333;transform:scaleX(0.8178);">C</div>
<div class="r" style="left:0px;top:429.5px;width:30.5px;height:1.0px;background:#dcdcdc;"></div>
<div class="t" style="left:8.20px;top:409.00px;font-size:16.715px;line-height:19.000px;font-weight:normal;color:#333;transform:scaleX(0.9358);">1</div>
<div class="r" style="left:0px;top:480.5px;width:30.5px;height:1.0px;background:#dcdcdc;"></div>
<div class="t" style="left:8.20px;top:460.00px;font-size:16.715px;line-height:19.000px;font-weight:normal;color:#333;transform:scaleX(0.9358);">2</div>
<div class="r" style="left:0px;top:532.5px;width:30.5px;height:1.0px;background:#dcdcdc;"></div>
<div class="t" style="left:8.20px;top:512.00px;font-size:16.715px;line-height:19.000px;font-weight:normal;color:#333;transform:scaleX(0.9358);">3</div>
<div class="r" style="left:0px;top:583.5px;width:30.5px;height:1.0px;background:#dcdcdc;"></div>
<div class="t" style="left:8.20px;top:563.00px;font-size:16.715px;line-height:19.000px;font-weight:normal;color:#333;transform:scaleX(0.9358);">4</div>
<div class="r" style="left:0px;top:635.5px;width:30.5px;height:1.0px;background:#dcdcdc;"></div>
<div class="t" style="left:8.20px;top:615.00px;font-size:16.715px;line-height:19.000px;font-weight:normal;color:#333;transform:scaleX(0.9358);">5</div>
<div class="r" style="left:0px;top:686.5px;width:30.5px;height:1.0px;background:#dcdcdc;"></div>
<div class="t" style="left:8.20px;top:666.00px;font-size:16.715px;line-height:19.000px;font-weight:normal;color:#333;transform:scaleX(0.9358);">6</div>
<div class="r" style="left:0px;top:738.5px;width:30.5px;height:1.0px;background:#dcdcdc;"></div>
<div class="t" style="left:8.20px;top:718.00px;font-size:16.715px;line-height:19.000px;font-weight:normal;color:#333;transform:scaleX(0.9358);">7</div>
<div class="r" style="left:0px;top:789.5px;width:30.5px;height:1.0px;background:#dcdcdc;"></div>
<div class="t" style="left:8.20px;top:769.00px;font-size:16.715px;line-height:19.000px;font-weight:normal;color:#333;transform:scaleX(0.9358);">8</div>
<div class="r" style="left:0px;top:841.5px;width:30.5px;height:1.0px;background:#dcdcdc;"></div>
<div class="t" style="left:8.20px;top:821.00px;font-size:16.715px;line-height:19.000px;font-weight:normal;color:#333;transform:scaleX(0.9358);">9</div>
<div class="r" style="left:0px;top:892.5px;width:30.5px;height:1.0px;background:#dcdcdc;"></div>
<div class="t" style="left:4.10px;top:872.00px;font-size:16.715px;line-height:19.000px;font-weight:normal;color:#333;transform:scaleX(0.9842);">10</div>
<div class="r" style="left:0px;top:944.5px;width:30.5px;height:1.0px;background:#dcdcdc;"></div>
<div class="t" style="left:4.10px;top:924.00px;font-size:16.715px;line-height:19.000px;font-weight:normal;color:#333;transform:scaleX(1.0546);">11</div>
<div class="r" style="left:0px;top:995.5px;width:30.5px;height:1.0px;background:#dcdcdc;"></div>
<div class="t" style="left:4.10px;top:975.00px;font-size:16.715px;line-height:19.000px;font-weight:normal;color:#333;transform:scaleX(0.9842);">12</div>
<div class="r" style="left:0px;top:1047.5px;width:30.5px;height:1.0px;background:#dcdcdc;"></div>
<div class="t" style="left:4.10px;top:1027.00px;font-size:16.715px;line-height:19.000px;font-weight:normal;color:#333;transform:scaleX(0.9842);">13</div>
<div class="r" style="left:0px;top:1098.5px;width:30.5px;height:1.0px;background:#dcdcdc;"></div>
<div class="t" style="left:4.10px;top:1078.00px;font-size:16.715px;line-height:19.000px;font-weight:normal;color:#333;transform:scaleX(0.9842);">14</div>
<div class="t" style="left:39.50px;top:381.00px;font-size:39.390px;line-height:44.000px;font-weight:bold;color:#000;transform:scaleX(0.9474);">Costs summary</div>
<div class="t" style="left:771.50px;top:512.00px;font-size:17.297px;line-height:20.000px;font-weight:normal;color:#fff;transform:scaleX(1.0159);">Solution</div>
<div class="t" style="left:35.30px;top:562.00px;font-size:17.151px;line-height:20.000px;font-weight:normal;color:#fff;transform:scaleX(0.9863);">Simple Naming</div>
<div class="t" style="left:403.20px;top:562.00px;font-size:17.151px;line-height:20.000px;font-weight:normal;color:#fff;transform:scaleX(0.9869);">Values</div>
<div class="t" style="left:771.50px;top:562.00px;font-size:17.151px;line-height:20.000px;font-weight:normal;color:#fff;">Solution 1</div>
<div class="t" style="left:35.40px;top:615.00px;font-size:16.715px;line-height:19.000px;font-weight:bold;color:#fff;transform:scaleX(0.9617);">V1 (standard elec prices)</div>
<div class="t" style="left:35.40px;top:821.00px;font-size:16.715px;line-height:19.000px;font-weight:bold;color:#fff;transform:scaleX(0.9637);">V2 (higher elec prices)</div>
<div class="t" style="left:403.60px;top:614.00px;font-size:17.151px;line-height:20.000px;font-weight:normal;color:#000;transform:scaleX(0.9480);">Sum of Life-cycle cost (CHF)</div>
<div class="t" style="left:403.60px;top:665.00px;font-size:17.151px;line-height:20.000px;font-weight:normal;color:#000;transform:scaleX(0.9798);">Sum of Investment (CHF)</div>
<div class="t" style="left:403.60px;top:717.00px;font-size:17.151px;line-height:20.000px;font-weight:normal;color:#000;transform:scaleX(0.9575);">Sum of CO2 emissions (kg-CO2)</div>
<div class="t" style="left:403.60px;top:768.00px;font-size:17.151px;line-height:20.000px;font-weight:normal;color:#000;transform:scaleX(0.9850);">Sum of Annualized life-cycle cost (CHF/year)</div>
<div class="t" style="left:403.60px;top:820.00px;font-size:17.151px;line-height:20.000px;font-weight:normal;color:#000;transform:scaleX(0.9480);">Sum of Life-cycle cost (CHF)</div>
<div class="t" style="left:403.60px;top:871.00px;font-size:17.151px;line-height:20.000px;font-weight:normal;color:#000;transform:scaleX(0.9798);">Sum of Investment (CHF)</div>
<div class="t" style="left:403.60px;top:923.00px;font-size:17.151px;line-height:20.000px;font-weight:normal;color:#000;transform:scaleX(0.9575);">Sum of CO2 emissions (kg-CO2)</div>
<div class="t" style="left:403.60px;top:974.00px;font-size:17.151px;line-height:20.000px;font-weight:normal;color:#000;transform:scaleX(0.9850);">Sum of Annualized life-cycle cost (CHF/year)</div>
<div style="position:absolute;left:767px;top:0;width:112px;height:1125px;overflow:hidden">
<div class="t" style="left:34.60px;top:614.00px;font-size:17.151px;line-height:20.000px;font-weight:normal;color:#000;transform:scaleX(0.9640);">6’698 kCHF</div>
<div class="t" style="left:34.60px;top:665.00px;font-size:17.151px;line-height:20.000px;font-weight:normal;color:#000;transform:scaleX(0.9640);">5’502 kCHF</div>
<div class="t" style="left:67.40px;top:717.00px;font-size:17.151px;line-height:20.000px;font-weight:normal;color:#000;transform:scaleX(1.0200);">9’404</div>
<div class="t" style="left:11.00px;top:768.00px;font-size:17.151px;line-height:20.000px;font-weight:normal;color:#000;transform:scaleX(0.9400);">260 kCHF/Jahr</div>
<div class="t" style="left:34.60px;top:820.00px;font-size:17.151px;line-height:20.000px;font-weight:normal;color:#000;transform:scaleX(0.9640);">8’064 kCHF</div>
<div class="t" style="left:34.60px;top:871.00px;font-size:17.151px;line-height:20.000px;font-weight:normal;color:#000;transform:scaleX(0.9640);">5’817 kCHF</div>
<div class="t" style="left:67.40px;top:923.00px;font-size:17.151px;line-height:20.000px;font-weight:normal;color:#000;transform:scaleX(1.0200);">6’234</div>
<div class="t" style="left:11.00px;top:974.00px;font-size:17.151px;line-height:20.000px;font-weight:normal;color:#000;transform:scaleX(0.9400);">313 kCHF/Jahr</div>
</div>
<div class="r" style="left:879px;top:346px;width:28px;height:779px;background:#f3f3f3;border-radius:8px 8px 0 0;"></div>
<div class="r" style="left:907px;top:349px;width:1.5px;height:776px;background:#d9d9d9;"></div>
<svg class="r" style="left:887px;top:353px;" width="14" height="11" viewBox="0 0 14 11"><path d="M1 10 L7 1.5 L13 10 Z" fill="#707070" stroke="#707070" stroke-width="1" stroke-linejoin="round"/></svg>
<div class="r" style="left:888px;top:370px;width:12px;height:58px;background:#7b7b7b;border-radius:6px;"></div>
<div class="t" style="left:924.60px;top:366.00px;font-size:29.215px;line-height:32.000px;font-weight:normal;color:#404040;transform:scaleX(0.9418);">PivotTable Fields</div>
<div class="t" style="left:926.30px;top:420.00px;font-size:17.006px;line-height:19.000px;font-weight:normal;color:#242424;transform:scaleX(0.9740);">Choose fields to add to report:</div>
<div class="r" style="left:925.2px;top:465.6px;width:614.8px;height:31.899999999999977px;background:#fff;border:1.5px solid #a0a0a0;"></div>
<div class="t" style="left:933.70px;top:472.00px;font-size:16.570px;line-height:19.000px;font-weight:normal;color:#6e6e6e;transform:scaleX(0.9066);">Search</div>
<div class="r" style="left:925.2px;top:520.3px;width:614.8px;height:263.5px;background:#fff;border:1.5px solid #a0a0a0;"></div>
<div style="position:absolute;left:926.7px;top:521.8px;width:600px;height:260.5px;overflow:hidden">
<div class="r" style="left:3.8999999999999773px;top:-3.8999999999999773px;width:17.399999999999977px;height:17.200000000000045px;background:#fff;border:1px solid #8a8a8a;"></div>
<div class="t" style="left:29.60px;top:-1.00px;font-size:16.134px;line-height:18.000px;font-weight:normal;color:#242424;transform:scaleX(0.9815);">O&amp;M cost (CHF)</div>
<div class="r" style="left:3.8999999999999773px;top:25.600000000000023px;width:17.399999999999977px;height:17.200000000000045px;background:#fff;border:1px solid #8a8a8a;"></div>
<div class="t" style="left:29.60px;top:29.00px;font-size:16.134px;line-height:18.000px;font-weight:normal;color:#242424;transform:scaleX(0.9745);">Replacement cost (CHF)</div>
<div class="r" style="left:3.8999999999999773px;top:55.10000000000002px;width:17.399999999999977px;height:17.200000000000045px;background:#fff;border:1px solid #8a8a8a;"></div>
<div class="t" style="left:29.60px;top:58.00px;font-size:16.134px;line-height:18.000px;font-weight:normal;color:#242424;transform:scaleX(0.9576);">Salvage revenue (CHF)</div>
<div class="r" style="left:3.8999999999999773px;top:84.60000000000002px;width:17.399999999999977px;height:17.200000000000045px;background:#fff;border:1px solid #8a8a8a;"></div>
<div class="t" style="left:29.60px;top:88.00px;font-size:16.134px;line-height:18.000px;font-weight:normal;color:#242424;transform:scaleX(0.9643);">Demands revenue (CHF)</div>
<div class="r" style="left:3.8999999999999773px;top:114.10000000000002px;width:17.399999999999977px;height:17.200000000000045px;background:#fff;border:1px solid #8a8a8a;"></div>
<div class="t" style="left:29.60px;top:117.00px;font-size:16.134px;line-height:18.000px;font-weight:normal;color:#242424;transform:scaleX(0.9859);">Embodied CO2 emissions (kg-CO2)</div>
<div class="r" style="left:3.8999999999999773px;top:143.60000000000002px;width:17.399999999999977px;height:17.200000000000045px;background:#fff;border:1px solid #8a8a8a;"></div>
<div class="t" style="left:29.60px;top:147.00px;font-size:16.134px;line-height:18.000px;font-weight:normal;color:#242424;transform:scaleX(0.9838);">Imports CO2 emissions (kg-CO2)</div>
<div class="r" style="left:3.8999999999999773px;top:173.10000000000002px;width:17.399999999999977px;height:17.200000000000045px;background:#fff;border:1px solid #8a8a8a;"></div>
<div class="t" style="left:29.60px;top:176.00px;font-size:16.134px;line-height:18.000px;font-weight:normal;color:#242424;transform:scaleX(0.9907);">Exports CO2 compensation (kg-CO2)</div>
<div class="r" style="left:3.8999999999999773px;top:202.60000000000002px;width:17.399999999999977px;height:17.200000000000045px;background:#107c41;"></div>
<svg class="r" style="left:6.2999999999999545px;top:206.60000000000002px;" width="13" height="10" viewBox="0 0 13 10"><path d="M1 5 L4.5 8.5 L12 1" fill="none" stroke="#fff" stroke-width="1.5"/></svg>
<div class="t" style="left:29.60px;top:206.00px;font-size:16.134px;line-height:18.000px;font-weight:bold;color:#1a1a1a;transform:scaleX(0.9953);">Simple Naming</div>
<div class="r" style="left:3.8999999999999773px;top:232.10000000000002px;width:17.399999999999977px;height:17.200000000000045px;background:#fff;border:1px solid #8a8a8a;"></div>
<div class="t" style="left:29.60px;top:235.00px;font-size:16.134px;line-height:18.000px;font-weight:normal;color:#242424;transform:scaleX(0.9519);">Control LCC</div>
</div>
<div class="r" style="left:926.7px;top:805px;width:582.3px;height:1.5px;border-top:1.5px dotted #c4c4c4;"></div>
<div class="t" style="left:931.60px;top:813.00px;font-size:16.134px;line-height:18.000px;font-weight:normal;color:#242424;transform:scaleX(1.0102);">Drag fields between areas below:</div>
<div class="r" style="left:1504.5px;top:855.7px;width:1.5px;height:269.29999999999995px;background:#c8c8c8;"></div>
<svg class="r" style="left:934px;top:858px;" width="17" height="17" viewBox="0 0 17 17"><path d="M0.5 0.8 H16 L10.3 7.5 V16 H6.2 V7.5 Z" fill="#8a8a8a"/></svg>
<div class="t" style="left:960.10px;top:859.00px;font-size:16.570px;line-height:19.000px;font-weight:normal;color:#242424;transform:scaleX(0.9422);">Filters</div>
<div class="r" style="left:929.3px;top:884.4px;width:567.7px;height:106.80000000000007px;background:#fff;"></div>
<div class="r" style="left:929.3px;top:1097px;width:567.7px;height:28px;background:#fff;"></div>
<svg class="r" style="left:936px;top:1013px;" width="14" height="12" viewBox="0 0 14 12"><g stroke="#8c8c8c" stroke-width="1.1"><path d="M0 1 H13 M0 3.6 H13 M0 6.2 H13 M0 8.8 H13 M0 11.4 H13"/></g><rect x="0" y="0" width="13" height="4" fill="#8c8c8c"/></svg>
<div class="t" style="left:960.90px;top:1012.00px;font-size:16.860px;line-height:19.000px;font-weight:normal;color:#242424;transform:scaleX(0.8847);">Rows</div>
<div class="r" style="left:930.8px;top:1038.7px;width:565.0px;height:27.59999999999991px;background:#fff;border:1.3px solid #bdbdbd;"></div>
<div class="t" style="left:940.80px;top:1045.00px;font-size:16.860px;line-height:19.000px;font-weight:normal;color:#242424;transform:scaleX(0.9797);">Simple Naming</div>
<svg class="r" style="left:1477px;top:1050px;" width="9" height="7" viewBox="0 0 9 7"><path d="M1 1 L4.3 4.6 L7.6 1" fill="none" stroke="#333" stroke-width="1.6"/></svg>
<div class="r" style="left:930.8px;top:1068px;width:565.0px;height:29px;background:#fff;border:1.3px solid #bdbdbd;border-top:none;"></div>
<svg class="r" style="left:942px;top:1076px;" width="15" height="17" viewBox="0 0 15 17"><path d="M13.5 0.8 H1.5 L7.8 8 L1.5 15.2 H13.5" fill="none" stroke="#333" stroke-width="1.3"/></svg>
<div class="t" style="left:964.50px;top:1075.00px;font-size:16.424px;line-height:18.000px;font-weight:normal;color:#242424;transform:scaleX(0.9632);">Values</div>
<svg class="r" style="left:1477px;top:1080px;" width="9" height="7" viewBox="0 0 9 7"><path d="M1 1 L4.3 4.6 L7.6 1" fill="none" stroke="#333" stroke-width="1.6"/></svg>
<div class="r" style="left:17.3px;top:600px;width:275.3px;height:49px;border:9px solid #4cd35c;"></div>
<div class="r" style="left:17.3px;top:808px;width:275.3px;height:49px;border:9px solid #4cd35c;"></div>
<div class="r" style="left:1509px;top:0px;width:4px;height:1125px;background:#000;"></div>
<div class="r" style="left:921.3px;top:997.1px;width:591.7px;height:79.80000000000007px;border:9px solid #4cd35c;"></div>
</body></html>
